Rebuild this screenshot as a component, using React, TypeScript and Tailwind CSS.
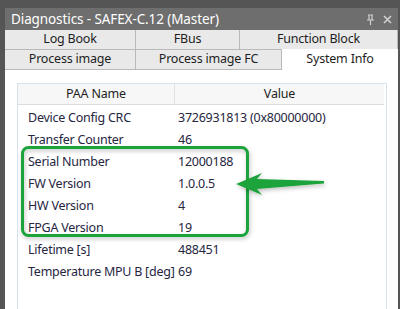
const ROWS: [string, string][] = [
  ['Device Config CRC', '3726931813 (0x80000000)'],
  ['Transfer Counter', '46'],
  ['Serial Number', '12000188'],
  ['FW Version', '1.0.0.5'],
  ['HW Version', '4'],
  ['FPGA Version', '19'],
  ['Lifetime [s]', '488451'],
  ['Temperature MPU B [deg]', '69'],
]

function Tab({ label, className }: { label: string; className: string }) {
  return (
    <div
      className={`flex h-[20px] items-center justify-center border-r border-b border-[#b9b9b9] bg-[#e9e9e9] text-[12.5px] tracking-[-0.2px] text-[#1e1e1e] ${className}`}
    >
      {label}
    </div>
  )
}

export default function App() {
  return (
    <div
      className="flex h-[309px] w-[400px] flex-col overflow-hidden bg-[#555555] pt-[8px] pl-[5px] pr-[2px]"
      style={{ fontFamily: '"Noto Sans", "Open Sans", sans-serif' }}
    >
      {/* title bar */}
      <div className="flex h-[22px] items-center justify-between bg-[#6e6e6e] pl-[6px] pr-[6px]">
        <span className="text-[13.5px] tracking-[-0.1px] text-white">Diagnostics - SAFEX-C.12 (Master)</span>
        <div className="flex items-center gap-[8px]">
          <svg width="9" height="11" viewBox="0 0 9 11">
            <path d="M2 1h5M3 1v5M6 1v5M1 6h7M4.5 6v5" stroke="#d0d0d0" strokeWidth="1.2" fill="none" />
          </svg>
          <svg width="9" height="9" viewBox="0 0 9 9">
            <path d="M1 1l7 7M8 1l-7 7" stroke="#d0d0d0" strokeWidth="1.6" />
          </svg>
        </div>
      </div>

      {/* tabs */}
      <div className="flex flex-col bg-[#dcdcdc]">
        <div className="flex">
          <Tab label="Log Book" className="w-[131px]" />
          <Tab label="FBus" className="w-[104px]" />
          <Tab label="Function Block" className="flex-1" />
        </div>
        <div className="flex">
          <Tab label="Process image" className="w-[131px]" />
          <Tab label="Process image FC" className="w-[146px]" />
          <div className="-mt-[1px] flex h-[21px] flex-1 items-center justify-center bg-white text-[12.5px] tracking-[-0.2px] text-[#1e1e1e]">
            System Info
          </div>
        </div>
      </div>

      {/* content */}
      <div className="relative flex-1 bg-white pl-[12px] pr-[11px] pt-[13px]">
        <div className="h-full border-l border-r border-t border-[#d5e3ef]">
          <div className="mr-[2px] flex h-[21px] border-b border-[#dcdcdc] bg-[#f7f7f7] text-[12.5px] tracking-[-0.2px] text-[#1e1e1e]">
            <div className="flex w-[157px] items-center justify-center border-r border-[#e2e2e2]">PAA Name</div>
            <div className="flex flex-1 items-center justify-center">Value</div>
          </div>
          <div className="pt-[2px]">
            {ROWS.map(([name, value]) => (
              <div
                key={name}
                className="flex h-[22px] items-center whitespace-nowrap text-[12.5px] tracking-[-0.25px] text-[#26263f]"
              >
                <div className="w-[160px] pl-[10px]">{name}</div>
                <div>{value}</div>
              </div>
            ))}
          </div>
        </div>

        {/* annotation */}
        <svg
          className="pointer-events-none absolute left-0 top-0"
          width="393"
          height="239"
          viewBox="0 0 393 239"
        >
          <defs>
            <filter id="sh" x="-10%" y="-10%" width="120%" height="130%">
              <feDropShadow dx="1" dy="2" stdDeviation="2" floodColor="#000" floodOpacity="0.25" />
            </filter>
          </defs>
          <rect
            x="17.5"
            y="77.5"
            width="225"
            height="88"
            rx="6"
            fill="none"
            stroke="#1fa33a"
            strokeWidth="3"
            filter="url(#sh)"
          />
          <polygon
            points="231,114 257,103 252,109 319,111 319,113.5 252,119 257,125"
            fill="#1fa33a"
            filter="url(#sh)"
          />
        </svg>
      </div>
    </div>
  )
}
